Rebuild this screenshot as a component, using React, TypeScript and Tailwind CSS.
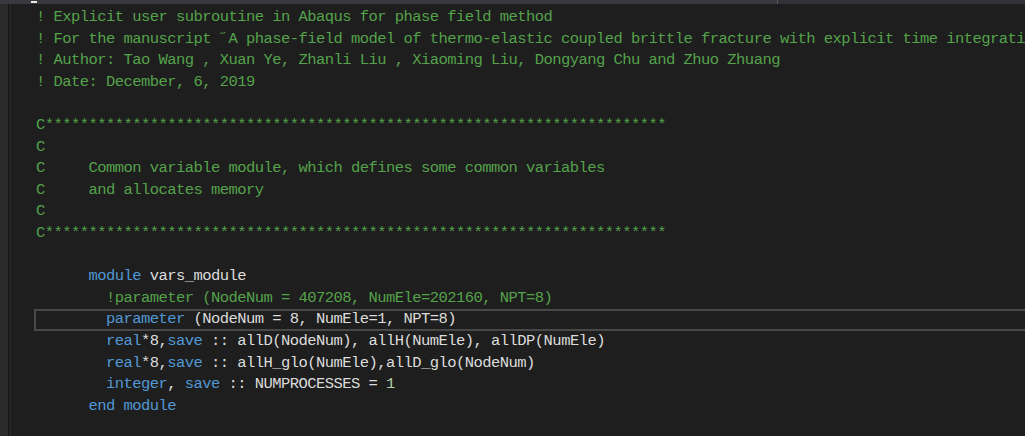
import React from "react";

const G = "text-[#55a24b]";
const B = "text-[#5298d4]";
const W = "text-[#dcdcdc]";
const N = "text-[#b5cea8]";

type Seg = [string, string];

const stars = "C" + "*".repeat(71);

const lines: Seg[][] = [
  [[G, "! Explicit user subroutine in Abaqus for phase field method"]],
  [[G, "! For the manuscript \u02DDA phase-field model of thermo-elastic coupled brittle fracture with explicit time integration"]],
  [[G, "! Author: Tao Wang , Xuan Ye, Zhanli Liu , Xiaoming Liu, Dongyang Chu and Zhuo Zhuang"]],
  [[G, "! Date: December, 6, 2019"]],
  [],
  [[G, stars]],
  [[G, "C"]],
  [[G, "C     Common variable module, which defines some common variables"]],
  [[G, "C     and allocates memory"]],
  [[G, "C"]],
  [[G, stars]],
  [],
  [[W, "      "], [B, "module"], [W, " vars_module"]],
  [[W, "        "], [G, "!parameter (NodeNum = 407208, NumEle=202160, NPT=8)"]],
  [[W, "        "], [B, "parameter"], [W, " (NodeNum = 8, NumEle=1, NPT=8)"]],
  [[W, "        "], [B, "real"], [W, "*8,"], [B, "save"], [W, " :: allD(NodeNum), allH(NumEle), allDP(NumEle)"]],
  [[W, "        "], [B, "real"], [W, "*8,"], [B, "save"], [W, " :: allH_glo(NumEle),allD_glo(NodeNum)"]],
  [[W, "        "], [B, "integer"], [W, ", "], [B, "save"], [W, " :: NUMPROCESSES = "], [N, "1"]],
  [[W, "      "], [B, "end module"]],
  [],
];

export default function App() {
  return (
    <div className="w-[1025px] h-[436px] overflow-hidden bg-[#1e1e1e] flex flex-col">
      <div className="h-[4px] flex shrink-0">
        <div className="w-[777px] bg-[#3a3a3e] relative">
          <div className="absolute left-[31px] top-[1px] w-[6px] h-[2px] bg-[#e8e8e8]" />
        </div>
        <div className="w-[1px] bg-[#555]" />
        <div className="flex-1 bg-[#333337]" />
      </div>
      <div className="flex flex-1 min-h-0">
        <div className="w-[8px] bg-[#2b2b2b] shrink-0" />
        <div className="w-[1px] bg-[#171717] shrink-0" />
        <div className="w-[2px] bg-[#252525] shrink-0" />
        <div
          className="flex-1 pt-[3px] pl-[25px] text-[15.5px] tracking-[-0.55px] leading-[21.6px] whitespace-pre overflow-hidden"
          style={{ fontFamily: '"Liberation Mono", "DejaVu Sans Mono", monospace' }}
        >
          {lines.map((segs, i) => (
            <div
              key={i}
              className={
                i === 14
                  ? "h-[21.6px] -ml-[2px] border-[2px] border-r-0 border-[#484848] box-border flex items-center"
                  : "h-[21.6px]"
              }
            >
              {segs.length === 0 ? " " : segs.map(([c, t], j) => (
                <span key={j} className={c}>{t}</span>
              ))}
            </div>
          ))}
        </div>
      </div>
    </div>
  );
}
